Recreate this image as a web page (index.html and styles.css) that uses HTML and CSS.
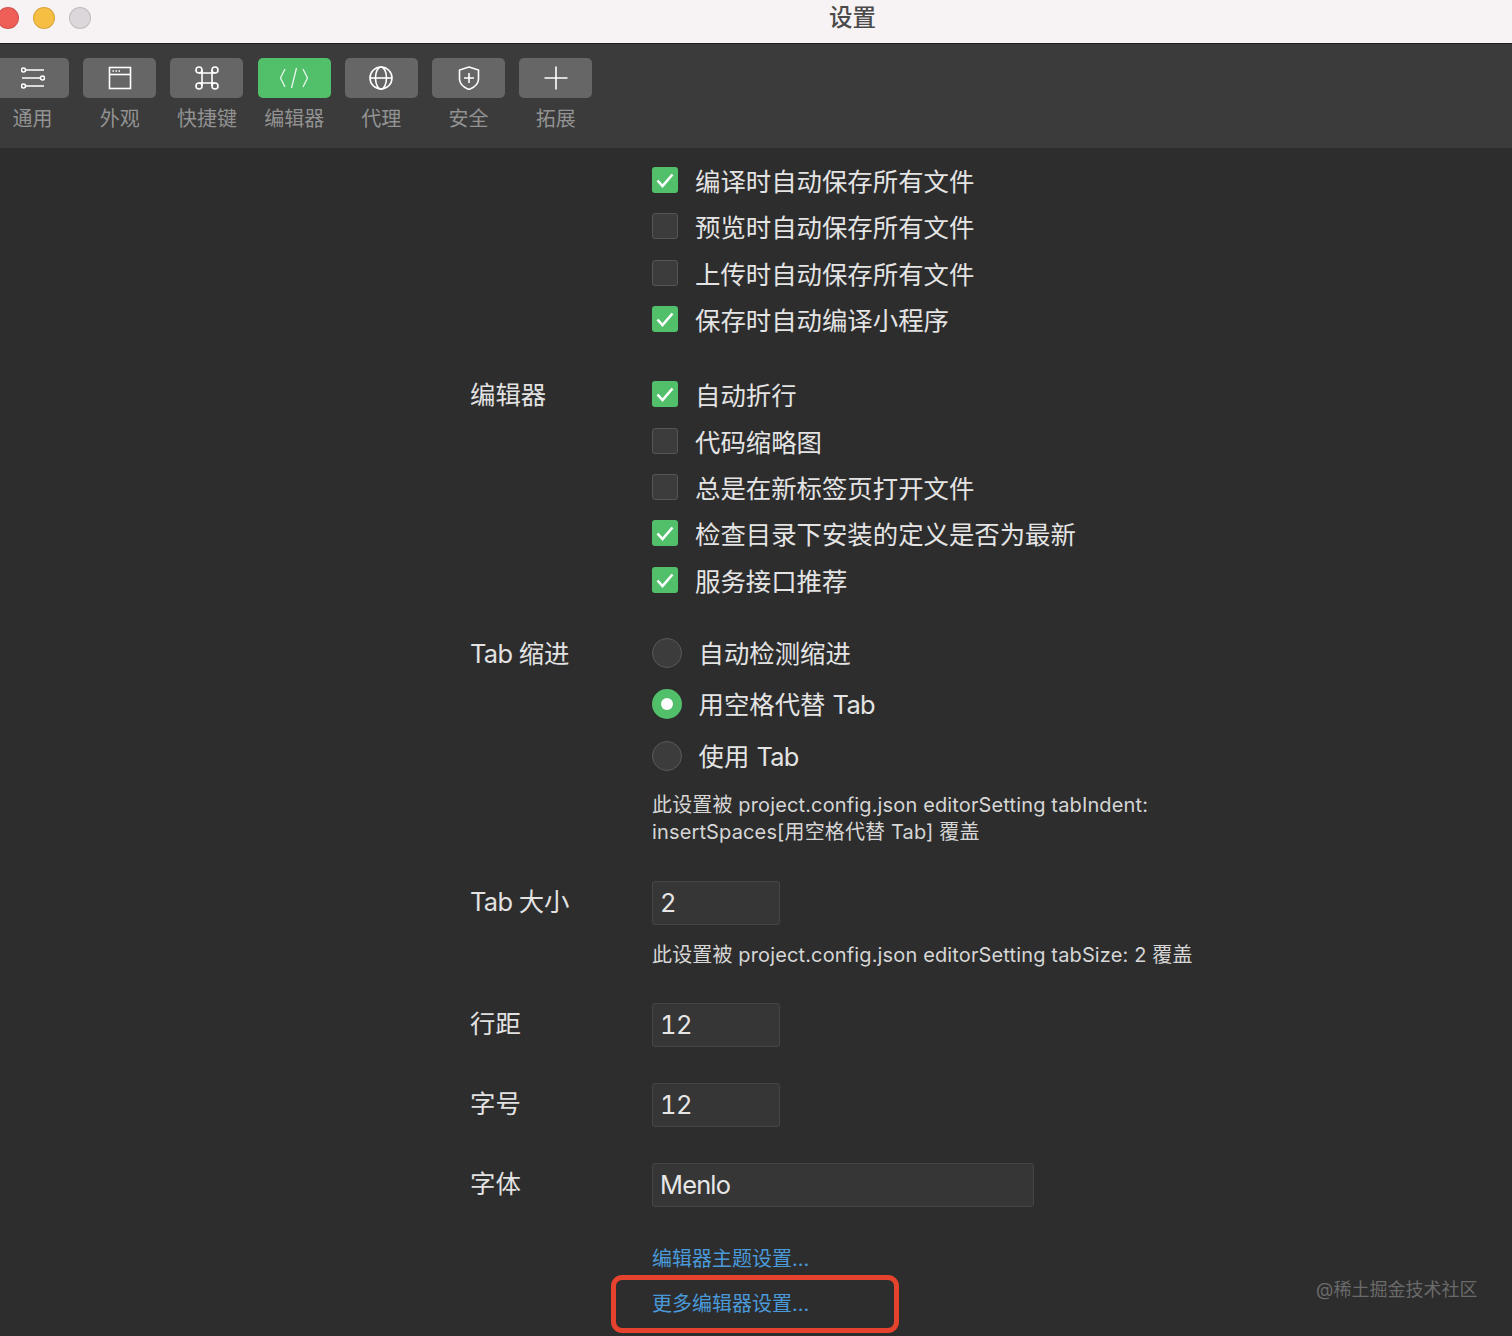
FILE: index.html
```html
<!DOCTYPE html>
<html lang="zh-CN">
<head>
<meta charset="utf-8">
<title>设置</title>
<link rel="stylesheet" href="styles.css">
</head>
<body>
<div class="window">
  <header class="titlebar">
    <span class="light light-red"></span>
    <span class="light light-yellow"></span>
    <span class="light light-gray"></span>
    <h1 class="title">设置</h1>
  </header>
  <nav class="toolbar">
    <div class="tool">
      <div class="tool-btn"><svg class="icon" viewBox="0 0 24 24"><path d="M4.5 4H23M1 12H19.500M4.500 20H23"/><circle cx="2.500" cy="4" r="2"/><circle cx="21.500" cy="12" r="2"/><circle cx="2.500" cy="20" r="2"/></svg></div>
      <span class="tool-label">通用</span>
    </div>
    <div class="tool">
      <div class="tool-btn"><svg class="icon" viewBox="0 0 24 24"><rect x="1.500" y="1.500" width="21" height="21"/><path d="M1.500 8.500H22.500"/><path class="dots" d="M4.500 5H6M7.500 5H9M10.500 5H12"/></svg></div>
      <span class="tool-label">外观</span>
    </div>
    <div class="tool">
      <div class="tool-btn"><svg class="icon" viewBox="0 0 24 24"><path d="M7 4V20M17 4V20M4 7H20M4 17H20"/><circle cx="4" cy="4" r="3"/><circle cx="20" cy="4" r="3"/><circle cx="4" cy="20" r="3"/><circle cx="20" cy="20" r="3"/></svg></div>
      <span class="tool-label">快捷键</span>
    </div>
    <div class="tool">
      <div class="tool-btn tool-btn-active"><svg class="icon icon-code" viewBox="0 0 30 24"><path d="M6 3L1.500 12L6 21M17.500 2L12.500 22M24 3L28.500 12L24 21"/></svg></div>
      <span class="tool-label">编辑器</span>
    </div>
    <div class="tool">
      <div class="tool-btn"><svg class="icon" viewBox="0 0 24 24"><circle cx="12" cy="12" r="11"/><ellipse cx="12" cy="12" rx="5.500" ry="11"/><path d="M1 12H23"/></svg></div>
      <span class="tool-label">代理</span>
    </div>
    <div class="tool">
      <div class="tool-btn"><svg class="icon" viewBox="0 0 24 24"><path d="M12 1L21.500 4V13C21.500 18 17 21.500 12 23.500C7 21.500 2.500 18 2.500 13V4Z"/><path d="M12 7V17M7 12H17"/></svg></div>
      <span class="tool-label">安全</span>
    </div>
    <div class="tool">
      <div class="tool-btn"><svg class="icon" viewBox="0 0 24 24"><path d="M12 0.500V23.500M0.500 12H23.500"/></svg></div>
      <span class="tool-label">拓展</span>
    </div>
  </nav>
  <main class="content">
    <section class="section section-first">
      <div class="label"></div>
      <div class="field">
        <label class="check"><span class="box box-on"><svg viewBox="0 0 26 26"><path d="M5.500 13.500L10.500 19L20.500 7.500"/></svg></span>编译时自动保存所有文件</label>
        <label class="check"><span class="box"></span>预览时自动保存所有文件</label>
        <label class="check"><span class="box"></span>上传时自动保存所有文件</label>
        <label class="check"><span class="box box-on"><svg viewBox="0 0 26 26"><path d="M5.500 13.500L10.500 19L20.500 7.500"/></svg></span>保存时自动编译小程序</label>
      </div>
    </section>
    <section class="section section-editor">
      <div class="label label-check">编辑器</div>
      <div class="field">
        <label class="check"><span class="box box-on"><svg viewBox="0 0 26 26"><path d="M5.500 13.500L10.500 19L20.500 7.500"/></svg></span>自动折行</label>
        <label class="check"><span class="box"></span>代码缩略图</label>
        <label class="check"><span class="box"></span>总是在新标签页打开文件</label>
        <label class="check"><span class="box box-on"><svg viewBox="0 0 26 26"><path d="M5.500 13.500L10.500 19L20.500 7.500"/></svg></span>检查目录下安装的定义是否为最新</label>
        <label class="check"><span class="box box-on"><svg viewBox="0 0 26 26"><path d="M5.500 13.500L10.500 19L20.500 7.500"/></svg></span>服务接口推荐</label>
      </div>
    </section>
    <section class="section section-indent">
      <div class="label label-radio"><span class="latin">Tab </span>缩进</div>
      <div class="field">
        <label class="radio"><span class="dot"></span><span>自动检测缩进</span></label>
        <label class="radio"><span class="dot dot-on"></span><span>用空格代替 <span class="latin">Tab</span></span></label>
        <label class="radio"><span class="dot"></span><span>使用 <span class="latin">Tab</span></span></label>
        <p class="note note-indent">此设置被 project.config.json editorSetting tabIndent:<br>insertSpaces[用空格代替 Tab] 覆盖</p>
      </div>
    </section>
    <section class="section section-input">
      <div class="label label-size"><span class="latin">Tab </span>大小</div>
      <div class="field">
        <div class="input">2</div>
        <p class="note note-size">此设置被 project.config.json editorSetting tabSize: 2 覆盖</p>
      </div>
    </section>
    <section class="section section-input">
      <div class="label label-input">行距</div>
      <div class="field"><div class="input">12</div></div>
    </section>
    <section class="section section-input">
      <div class="label label-input">字号</div>
      <div class="field"><div class="input">12</div></div>
    </section>
    <section class="section section-input">
      <div class="label label-input">字体</div>
      <div class="field"><div class="input input-wide">Menlo</div></div>
    </section>
    <section class="section section-links">
      <div class="label"></div>
      <div class="field">
        <a class="link">编辑器主题设置...</a>
        <a class="link">更多编辑器设置...</a>
      </div>
    </section>
  </main>
  <div class="highlight"></div>
  <div class="watermark">@稀土掘金技术社区</div>
</div>
</body>
</html>
```
FILE: styles.css
```css
* { box-sizing: border-box; }
html, body { margin: 0; padding: 0; }
body {
  font-family: Inter, "Noto Sans CJK SC", sans-serif;
  background: #2d2d2d;
}
.window {
  position: relative;
  width: 1512px;
  height: 1336px;
  overflow: hidden;
  background: #2d2d2d;
}
.titlebar {
  position: relative;
  height: 44px;
  display: flex;
  align-items: center;
  gap: 14px;
  padding: 0 0 7px 0;
  margin-left: -3px;
  background: #f7f2f4;
  border-bottom: 1px solid #1f1f1f;
}
.light {
  width: 22px;
  height: 22px;
  border-radius: 50%;
  border: 1px solid rgba(0, 0, 0, 0.12);
}
.light-red { background: #ef5f57; }
.light-yellow { background: #f6be43; }
.light-gray { background: #dcd7da; }
.title {
  position: absolute;
  left: 832px;
  top: 2px;
  margin: 0;
  font-size: 23.5px;
  line-height: 32px;
  font-weight: 500;
  color: #4a4a4a;
}
.toolbar {
  height: 104px;
  display: flex;
  padding-top: 14px;
  background: #3b3b3b;
  overflow: hidden;
}
.tool {
  flex: 0 0 87.2px;
  display: flex;
  flex-direction: column;
  align-items: center;
  gap: 7px;
}
.tool:first-child { margin-left: -11px; }
.tool-btn {
  width: 73px;
  height: 40px;
  flex: none;
  display: flex;
  align-items: center;
  justify-content: center;
  border-radius: 5px;
  background: #666666;
}
.tool-btn-active { background: #52bf6a; }
.tool-label {
  font-size: 20px;
  line-height: 28px;
  color: #929292;
}
.icon {
  width: 24px;
  height: 24px;
  fill: none;
  stroke: #ffffff;
  stroke-width: 1.6;
}
.icon .dots { stroke-width: 1.4; }
.icon-code { width: 30px; stroke-width: 1.3; stroke: #e8f7ec; }
.content { padding: 9px 0 0 470px; }
.section {
  display: grid;
  grid-template-columns: 182px 1fr;
}
.section-editor { margin-top: 29px; }
.section-indent { margin-top: 23px; }
.section-input { margin-top: 36px; }
.section-links { margin-top: 30.5px; }
.label {
  font-size: 25.4px;
  color: #e2e2e2;
}
.label-check { line-height: 48px; }
.label-radio { line-height: 56px; }
.label-input { line-height: 42px; }
.label-size { line-height: 42px; }
.latin { letter-spacing: -0.7px; }
.check, .radio {
  display: flex;
  align-items: center;
  font-size: 25.4px;
  color: #e4e4e4;
  white-space: nowrap;
}
.check { height: 46.33px; gap: 17px; }
.radio { height: 51.5px; gap: 16.5px; }
.box {
  width: 26px;
  height: 26px;
  flex: none;
  border-radius: 3px;
  border: 1px solid #555555;
  background: #3c3c3c;
}
.box-on {
  border: 0;
  background: #52bf6a;
}
.box svg {
  display: block;
  width: 26px;
  height: 26px;
  fill: none;
  stroke: #ffffff;
  stroke-width: 2.6;
}
.dot {
  position: relative;
  width: 30px;
  height: 30px;
  flex: none;
  margin-top: 2px;
  border-radius: 50%;
  border: 1px solid #5a5a5a;
  background: #3c3c3c;
}
.dot-on {
  border: 0;
  background: #52bf6a;
}
.dot-on::after {
  content: "";
  position: absolute;
  left: 9px;
  top: 9px;
  width: 12px;
  height: 12px;
  border-radius: 50%;
  background: #ffffff;
}
.note {
  margin: 0;
  font-size: 20px;
  line-height: 27px;
  letter-spacing: 0.14px;
  color: #d6d6d6;
  white-space: nowrap;
}
.note-indent { margin: 12px 0 -1px; }
.note-size { margin: 16.5px 0 -2px; }
.input {
  height: 44px;
  width: 128px;
  padding-left: 7px;
  font-size: 25.4px;
  font-variant-numeric: tabular-nums;
  letter-spacing: -0.5px;
  line-height: 42px;
  color: #e6e6e6;
  background: #363636;
  border: 1px solid #454545;
  border-radius: 3px;
}
.input-wide { width: 382px; letter-spacing: -0.8px; }
.link {
  display: block;
  height: 45px;
  font-size: 20px;
  line-height: 45px;
  color: #4a9ada;
}
.highlight {
  position: absolute;
  left: 611px;
  top: 1275px;
  width: 288px;
  height: 58px;
  border: 5px solid #e5432d;
  border-radius: 11px;
}
.watermark {
  position: absolute;
  left: 1316px;
  top: 1278px;
  font-size: 18px;
  line-height: 24px;
  color: #6a6a6a;
}
```
